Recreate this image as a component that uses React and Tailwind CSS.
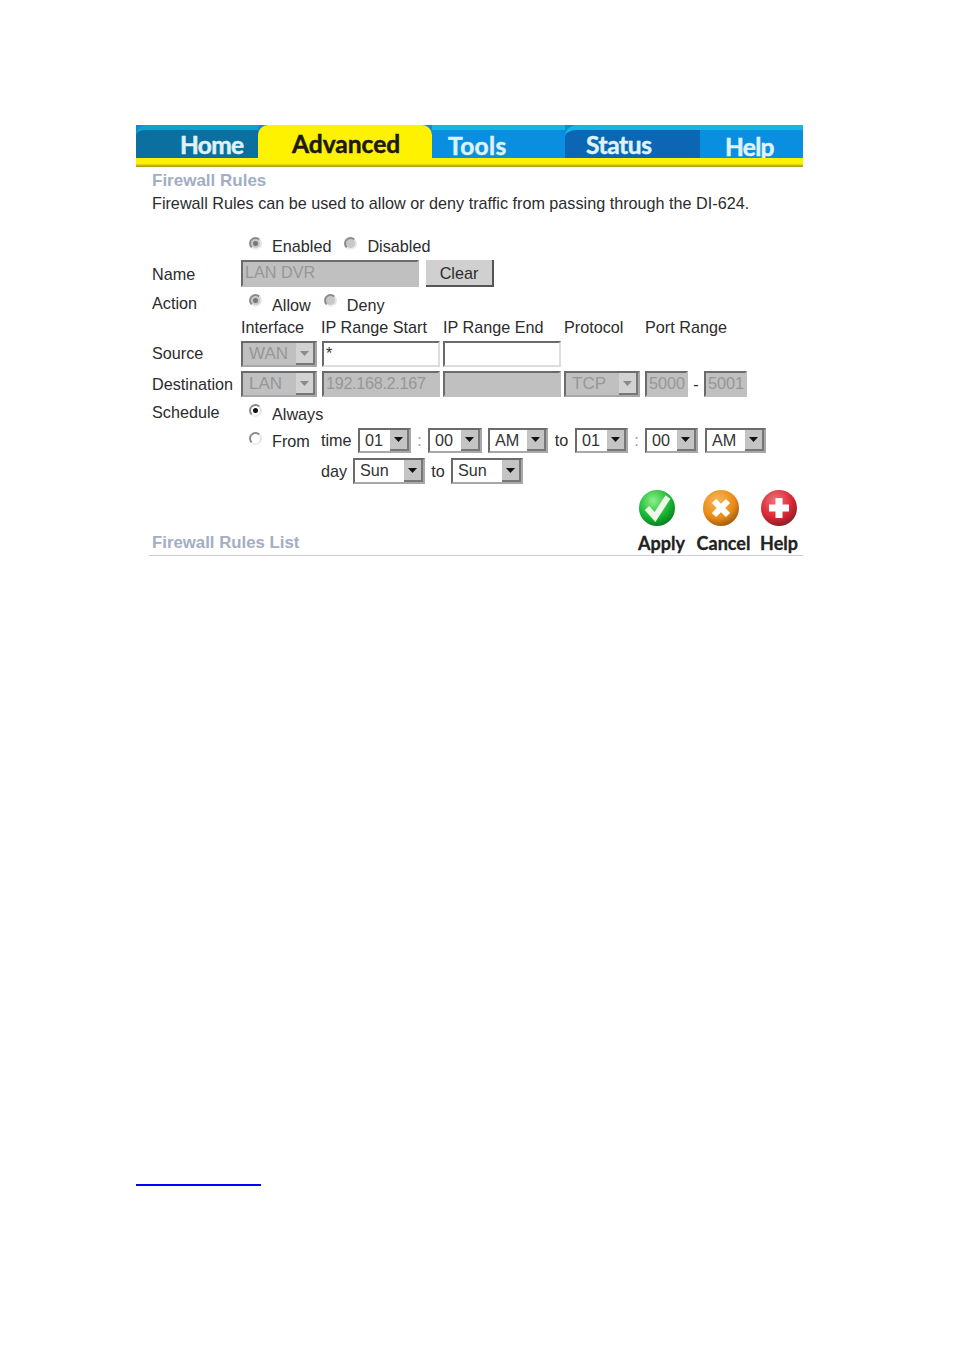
import React from 'react';

const sans = 'font-["Liberation_Sans",Arial,sans-serif]';

function Radio({ checked, disabled }) {
  return (
    <span className={`w-[13px] h-[13px] rounded-full border-2 border-t-[#8a8a8a] border-l-[#8a8a8a] border-r-[#e4e4e4] border-b-[#eeeeee] flex items-center justify-center shrink-0 ${disabled ? 'bg-[#c8c8c8]' : 'bg-white'}`}>
      {checked && <span className={`w-[5px] h-[5px] rounded-full ${disabled ? 'bg-[#777777]' : 'bg-[#111111]'}`} />}
    </span>
  );
}

function RadioLabel({ label, checked, disabled, className = '', textClass = 'mt-[-1px]' }) {
  return (
    <div className={`flex items-start ${className}`}>
      <Radio checked={checked} disabled={disabled} />
      <span className={`ml-[10px] leading-[20px] ${textClass}`}>{label}</span>
    </div>
  );
}

function Select({ value, width, disabled, height = 26, btn = 19, className = '' }) {
  return (
    <div
      style={{ width, height }}
      className={`flex items-stretch shrink-0 border-2 border-t-[#6b6b6b] border-l-[#6b6b6b] border-r-[#a8a8a8] border-b-[#a8a8a8] ${disabled ? 'bg-[#c0c0c0] text-[#979797] text-[17px]' : 'bg-white text-[#333333]'} ${className}`}
    >
      <span className={`flex-1 leading-[21px] ${disabled ? 'pl-[6px]' : 'pl-[5px]'}`}>{value}</span>
      <span
        style={{ width: btn }}
        className={`flex items-center justify-center border-r-2 border-b-2 border-[#777777] ${disabled ? 'bg-[#d2d2d2]' : 'bg-[#c4c4c4]'}`}
      >
        <svg width="9" height="5" viewBox="0 0 9 5">
          <path d="M0 0h9L4.5 5z" fill={disabled ? '#8a8a8a' : '#111111'} />
        </svg>
      </span>
    </div>
  );
}

function Input({ value, width, disabled, height = 26, className = '' }) {
  return (
    <div
      style={{ width, height }}
      className={`shrink-0 border-2 border-t-[#6b6b6b] border-l-[#6b6b6b] pl-[2px] leading-[21px] overflow-hidden whitespace-nowrap ${disabled ? 'bg-[#c0c0c0] border-r-[#c0c0c0] border-b-[#c0c0c0] text-[#979797]' : 'bg-white border-r-[#dddddd] border-b-[#dddddd] text-[#333333]'} ${className}`}
    >
      {value}
    </div>
  );
}

function ActionIcon({ id, c1, c2, c3, className = '', children }) {
  return (
    <svg width="38" height="38" viewBox="0 0 38 38" className={className}>
      <defs>
        <radialGradient id={id} cx="0.4" cy="0.3" r="0.8">
          <stop offset="0" stopColor={c1} />
          <stop offset="0.6" stopColor={c2} />
          <stop offset="1" stopColor={c3} />
        </radialGradient>
      </defs>
      <circle cx="19" cy="19" r="18" fill={`url(#${id})`} />
      {children}
    </svg>
  );
}

const tabFont = 'font-["Lato",sans-serif] font-bold text-[24.5px] leading-none [-webkit-text-stroke:0.5px]';

export default function App() {
  return (
    <div className={`w-[954px] h-[1350px] bg-white pt-[125px] pl-[136px] text-[16.2px] text-[#2c2c2c] ${sans}`}>
      {/* top nav */}
      <div className="w-[667px] h-[42px] relative bg-[#0a8bdc] flex">
        <div className={`w-[122px] h-[33px] bg-[#0b6f9f] rounded-tl-[10px] border-t-[5px] border-[#12a0d0] text-[#dff2f7] pl-[44px] pt-[3px] tracking-[-0.7px] ${tabFont}`}>Home</div>
        <div className={`w-[174px] h-[33px] bg-[#fff200] rounded-t-[10px] text-[#1a1a10] pl-[34px] pt-[7px] relative z-10 ${tabFont}`}>Advanced</div>
        <div className={`w-[133px] h-[33px] bg-[#0a8fe0] border-t-[5px] border-[#17b4e6] text-[#dff2f7] pl-[16px] pt-[4px] tracking-[0.4px] ${tabFont}`}>Tools</div>
        <div className={`w-[135px] h-[33px] bg-[#0c66b4] rounded-tl-[12px] border-t-[5px] border-[#17b4e6] text-[#dff2f7] pl-[21px] pt-[3px] tracking-[-0.4px] ${tabFont}`}>Status</div>
        <div className={`flex-1 h-[33px] bg-[#0a8fe0] border-t-[5px] border-[#17b4e6] text-[#dff2f7] pl-[25px] pt-[5px] tracking-[-0.7px] ${tabFont}`}>Help</div>
        <div className="absolute left-0 right-0 bottom-0 h-[9px] bg-[linear-gradient(#fff200_60%,#a88f10)]" />
      </div>

      <div className="w-[667px] pl-[16px]">
        <div className="mt-[4px] h-[20px] leading-[20px] font-bold text-[17px] text-[#a3adc4]">Firewall Rules</div>
        <div className="mt-[2px] h-[20px] leading-[20px] whitespace-nowrap">Firewall Rules can be used to allow or deny traffic from passing through the DI-624.</div>

        {/* status */}
        <div className="mt-[24px] h-[20px] flex pl-[97px]">
          <RadioLabel label="Enabled" checked disabled />
          <RadioLabel label="Disabled" disabled className="ml-[13px]" />
        </div>

        {/* name */}
        <div className="mt-[3px] h-[27px] flex items-center">
          <span className="w-[89px] mt-[1px]">Name</span>
          <Input value="LAN DVR" width={178} height={27} disabled />
          <div className="ml-[7px] w-[68px] h-[27px] bg-[#d0d0d0] border-r-2 border-b-2 border-[#555555] text-center leading-[27px]">Clear</div>
        </div>

        {/* action */}
        <div className="mt-[7px] h-[20px] flex">
          <span className="w-[97px] leading-[20px] mt-[-1px]">Action</span>
          <RadioLabel label="Allow" checked disabled textClass="mt-[1px]" />
          <RadioLabel label="Deny" disabled className="ml-[13px]" textClass="mt-[1px]" />
        </div>

        {/* column headers */}
        <div className="mt-[3px] h-[20px] flex leading-[20px] pl-[89px]">
          <span className="w-[80px]">Interface</span>
          <span className="w-[122px]">IP Range Start</span>
          <span className="w-[121px]">IP Range End</span>
          <span className="w-[81px]">Protocol</span>
          <span>Port Range</span>
        </div>

        {/* source */}
        <div className="mt-[4px] h-[26px] flex items-center">
          <span className="w-[89px] mt-[-2px]">Source</span>
          <Select value="WAN" width={76} disabled />
          <Input value="*" width={118} className="ml-[5px]" />
          <Input width={118} className="ml-[3px]" />
        </div>

        {/* destination */}
        <div className="mt-[4px] h-[26px] flex items-center">
          <span className="w-[89px] whitespace-nowrap">Destination</span>
          <Select value="LAN" width={76} disabled />
          <Input value="192.168.2.167" width={118} disabled className="ml-[5px] tracking-[-0.3px]" />
          <Input width={118} disabled className="ml-[3px]" />
          <Select value="TCP" width={76} disabled className="ml-[3px]" />
          <Input value="5000" width={43} disabled className="ml-[5px]" />
          <span className="w-[16px] text-center">-</span>
          <Input value="5001" width={43} disabled />
        </div>

        {/* schedule */}
        <div className="mt-[6px] h-[20px] flex">
          <span className="w-[97px] leading-[20px] mt-[-1px]">Schedule</span>
          <RadioLabel label="Always" checked className="mt-[1px]" textClass="mt-0" />
        </div>

        <div className="mt-[5px] h-[25px] flex items-center pl-[97px]">
          <RadioLabel label="From" className="w-[72px] mt-[1px]" textClass="mt-[-1px]" />
          <span className="w-[37px]">time</span>
          <Select value="01" width={53} height={25} />
          <span className="w-[17px] text-center text-[#999999]">:</span>
          <Select value="00" width={54} height={25} />
          <Select value="AM" width={60} height={25} className="ml-[6px]" />
          <span className="w-[27px] text-center">to</span>
          <Select value="01" width={53} height={25} />
          <span className="w-[17px] text-center text-[#999999]">:</span>
          <Select value="00" width={53} height={25} />
          <Select value="AM" width={61} height={25} className="ml-[7px]" />
        </div>

        <div className="mt-[5px] h-[26px] flex items-center pl-[169px]">
          <span className="w-[32px]">day</span>
          <Select value="Sun" width={72} />
          <span className="w-[26px] text-center">to</span>
          <Select value="Sun" width={72} />
        </div>

        {/* list heading + actions */}
        <div className="mt-[5px] h-[67px] flex justify-between items-end border-b border-[#c9cadb] ml-[-3px] pl-[3px]">
          <span className="font-bold text-[16.8px] text-[#a3adc4] leading-[20px] mb-[2px]">Firewall Rules List</span>
          <div className={`flex text-[18px] font-bold text-[#222222] font-["Lato",sans-serif] pr-[5px] mb-[2px] [-webkit-text-stroke:0.3px]`}>
            <div className="flex flex-col items-center w-[49px]">
              <ActionIcon id="apply" c1="#8df08a" c2="#12b52c" c3="#0a6b22" className="mr-[9px]">
                <path d="M9 19l8 9L30 8" fill="none" stroke="#eef7e8" strokeWidth="6" />
              </ActionIcon>
              <span className="leading-[20px] mt-[6px]">Apply</span>
            </div>
            <div className="flex flex-col items-center w-[66px] ml-[8px]">
              <ActionIcon id="cancel" c1="#f7b85a" c2="#e98a16" c3="#8a4a10" className="mr-[12px]">
                <path d="M12 12l14 14M26 12L12 26" fill="none" stroke="#ffffff" strokeWidth="6" />
              </ActionIcon>
              <span className="leading-[20px] mt-[6px] mr-[7px]">Cancel</span>
            </div>
            <div className="flex flex-col items-center w-[38px]">
              <ActionIcon id="help" c1="#f2727c" c2="#d8262f" c3="#6f1e24">
                <path d="M19 9v20M9 19h20" fill="none" stroke="#ffffff" strokeWidth="7" />
              </ActionIcon>
              <span className="leading-[20px] mt-[6px]">Help</span>
            </div>
          </div>
        </div>
      </div>

      <div className="mt-[628px] w-[125px] h-[2px] bg-[#0000ff]" />
    </div>
  );
}
